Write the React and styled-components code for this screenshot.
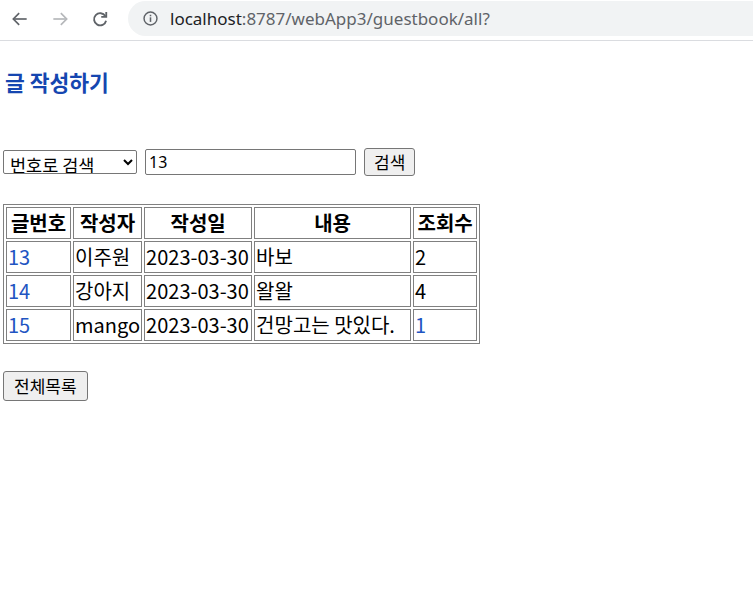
import React from "react";
import styled, { createGlobalStyle } from "styled-components";

const GlobalStyle = createGlobalStyle`
  html, body {
    margin: 0;
    padding: 0;
    background: #ffffff;
  }
  body {
    font-family: "Noto Sans CJK KR", "Noto Sans", sans-serif;
    color: #000;
  }
`;

const Toolbar = styled.div`
  height: 41px;
  border-bottom: 1px solid #dadce0;
  display: flex;
  align-items: flex-start;
  padding-top: 1px;
  box-sizing: border-box;
  background: #fff;
`;

const NavButton = styled.div`
  width: 40px;
  height: 36px;
  display: flex;
  align-items: center;
  justify-content: center;
`;

const NavGroup = styled.div`
  display: flex;
  width: 128px;
`;

const Omnibox = styled.div`
  flex: 1;
  height: 35px;
  background: #f1f3f4;
  border-radius: 18px 0 0 18px;
  display: flex;
  align-items: center;
  padding-left: 14px;
  gap: 11px;
  font-family: "Noto Sans", "Liberation Sans", sans-serif;
  font-size: 17px;
`;

const UrlHost = styled.span`
  color: #202124;
`;

const UrlPath = styled.span`
  color: #5f6368;
`;

const Page = styled.div`
  padding: 0 3px;
`;

const Heading = styled.h3`
  margin: 29px 0 0 2px;
  font-size: 21.5px;
  font-weight: bold;
  color: #1546b0;
  line-height: 24px;
`;

const SearchForm = styled.form`
  display: flex;
  align-items: center;
  gap: 8px;
  margin-top: 54px;
  font-family: "Noto Sans CJK KR", sans-serif;
`;

const Select = styled.select`
  width: 134px;
  height: 24px;
  box-sizing: border-box;
  font-size: 17.5px;
  line-height: 20px;
  font-family: "Noto Sans CJK KR", sans-serif;
  color: #000;
  border: 1px solid #767676;
  border-radius: 2px;
  background: #fff;
  padding: 0 2px;
`;

const TextInput = styled.input`
  width: 211px;
  height: 26px;
  box-sizing: border-box;
  font-size: 16px;
  font-family: "Noto Sans", sans-serif;
  border: 1px solid #767676;
  border-radius: 2px;
  padding: 0 3px;
`;

const Button = styled.button`
  height: ${(p) => p.$h || 28}px;
  font-size: 17px;
  line-height: 20px;
  font-family: inherit;
  border: 1px solid #767676;
  border-radius: 3px;
  background: #efefef;
  padding: 0 ${(p) => p.$px || 9}px;
  color: #000;
`;

const Table = styled.table`
  margin-top: 28px;
  border: 1px solid #808080;
  border-spacing: 2px;
  font-size: 20px;
`;

const HeadCell = styled.th`
  border: 1px solid #808080;
  padding: 1px;
  line-height: 28px;
  font-weight: bold;
  text-align: center;
  width: ${(p) => p.$w}px;
  white-space: nowrap;
`;

const Cell = styled.td`
  border: 1px solid #808080;
  padding: 1px;
  line-height: 28px;
  white-space: nowrap;
`;

const Link = styled.a`
  color: #1f55c2;
  text-decoration: none;
`;

const Footer = styled.div`
  margin-top: 27px;
`;

const rows = [
  { no: 13, writer: "이주원", date: "2023-03-30", content: "바보", hit: "2", hitLink: false },
  { no: 14, writer: "강아지", date: "2023-03-30", content: "왈왈", hit: "4", hitLink: false },
  { no: 15, writer: "mango", date: "2023-03-30", content: "건망고는 맛있다.", hit: "1", hitLink: true },
];

function BackIcon({ color }) {
  return (
    <svg width="20" height="20" viewBox="0 0 24 24" fill="none" stroke={color} strokeWidth="2">
      <path d="M20 12H5" />
      <path d="M11 5l-7 7 7 7" />
    </svg>
  );
}

function ForwardIcon({ color }) {
  return (
    <svg width="20" height="20" viewBox="0 0 24 24" fill="none" stroke={color} strokeWidth="2">
      <path d="M4 12h15" />
      <path d="M13 5l7 7-7 7" />
    </svg>
  );
}

function ReloadIcon() {
  return (
    <svg width="20" height="20" viewBox="0 0 24 24" fill="none" stroke="#5f6368" strokeWidth="2.2">
      <path d="M18.4 8.5A7.3 7.3 0 1 0 19.3 14" />
      <path d="M19.5 3.5v6h-6" />
    </svg>
  );
}

function InfoIcon() {
  return (
    <svg width="17" height="17" viewBox="0 0 20 20">
      <circle cx="10" cy="10" r="7.6" fill="none" stroke="#5f6368" strokeWidth="1.7" />
      <rect x="9.1" y="8.6" width="1.8" height="5.4" fill="#5f6368" />
      <rect x="9.1" y="5.6" width="1.8" height="1.8" fill="#5f6368" />
    </svg>
  );
}

export default function App() {
  return (
    <>
      <GlobalStyle />
      <Toolbar>
        <NavGroup>
          <NavButton>
            <BackIcon color="#5f6368" />
          </NavButton>
          <NavButton>
            <ForwardIcon color="#b5b7ba" />
          </NavButton>
          <NavButton>
            <ReloadIcon />
          </NavButton>
        </NavGroup>
        <Omnibox>
          <InfoIcon />
          <span>
            <UrlHost>localhost</UrlHost>
            <UrlPath>:8787/webApp3/guestbook/all?</UrlPath>
          </span>
        </Omnibox>
      </Toolbar>
      <Page>
        <Heading>글 작성하기</Heading>
        <SearchForm onSubmit={(e) => e.preventDefault()}>
          <Select defaultValue="no">
            <option value="no">번호로 검색</option>
            <option value="writer">작성자로 검색</option>
          </Select>
          <TextInput defaultValue="13" />
          <Button type="submit">검색</Button>
        </SearchForm>
        <Table>
          <thead>
            <tr>
              <HeadCell $w={61}>글번호</HeadCell>
              <HeadCell $w={64}>작성자</HeadCell>
              <HeadCell $w={104}>작성일</HeadCell>
              <HeadCell $w={153}>내용</HeadCell>
              <HeadCell $w={60}>조회수</HeadCell>
            </tr>
          </thead>
          <tbody>
            {rows.map((r) => (
              <tr key={r.no}>
                <Cell>
                  <Link href="#">{r.no}</Link>
                </Cell>
                <Cell>{r.writer}</Cell>
                <Cell>{r.date}</Cell>
                <Cell>{r.content}</Cell>
                <Cell>{r.hitLink ? <Link href="#">{r.hit}</Link> : r.hit}</Cell>
              </tr>
            ))}
          </tbody>
        </Table>
        <Footer>
          <Button $h={30} $px={10}>전체목록</Button>
        </Footer>
      </Page>
    </>
  );
}
